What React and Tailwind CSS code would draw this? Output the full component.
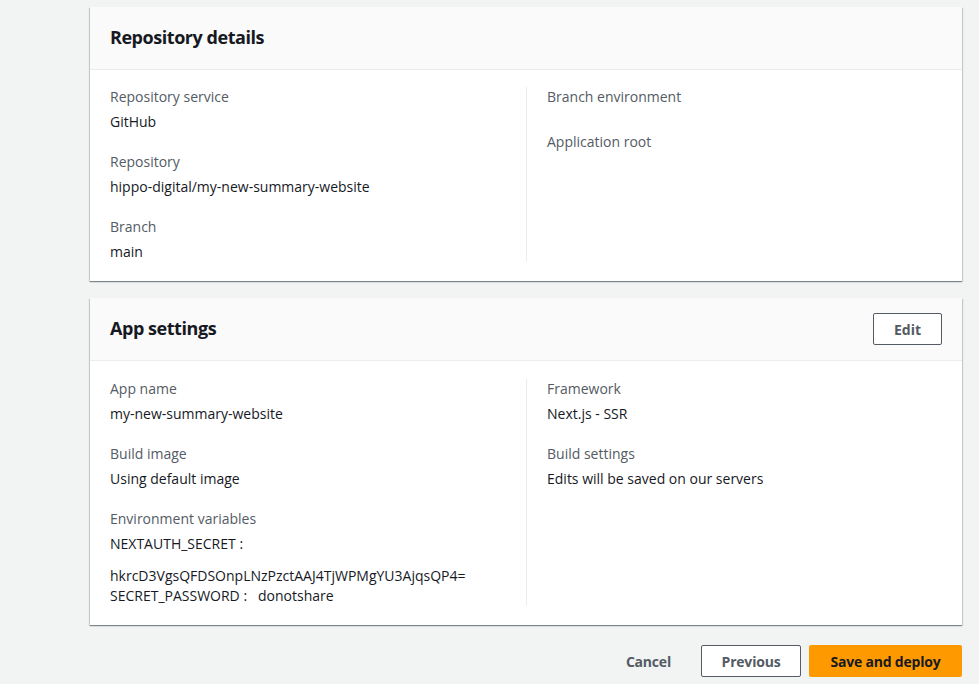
import React from "react";

const font = { fontFamily: '"Open Sans", "Liberation Sans", sans-serif' };

function Field({ label, value, children }) {
  return (
    <div className="mb-[20px] last:mb-0">
      <div className="text-[14px] leading-[20px] text-[#545b64]">{label}</div>
      {value !== undefined && (
        <div className="mt-[5px] text-[14px] leading-[20px] text-[#16191f]">{value}</div>
      )}
      {children}
    </div>
  );
}

function Card({ title, action, bodyTop, children }) {
  return (
    <div className="bg-white shadow-[0_1px_1px_0_rgba(0,28,36,0.3),1px_1px_1px_0_rgba(0,28,36,0.15),-1px_1px_1px_0_rgba(0,28,36,0.15)]">
      <div className="flex h-[63px] items-center justify-between border-b border-[#eaeded] bg-[#fafafa] px-5">
        <h2 className="pb-[3px] text-[18px] font-bold leading-[22px] tracking-[-0.45px] text-[#16191f]">{title}</h2>
        {action}
      </div>
      <div className={"grid grid-cols-2 px-5 pb-[19px] " + bodyTop}>{children}</div>
    </div>
  );
}

export default function App() {
  return (
    <div style={font} className="min-h-[684px] w-full bg-[#f2f3f3] pt-[7px] pl-[90px] pr-[17px]">
      <Card title="Repository details" bodyTop="pt-[17px]">
        <div>
          <Field label="Repository service" value="GitHub" />
          <Field label="Repository" value="hippo-digital/my-new-summary-website" />
          <Field label="Branch" value="main" />
        </div>
        <div className="border-l border-[#eaeded] pl-5">
          <div className="mb-[25px] text-[14px] leading-[20px] text-[#545b64]">Branch environment</div>
          <div className="text-[14px] leading-[20px] text-[#545b64]">Application root</div>
        </div>
      </Card>

      <div className="mt-[17px]">
        <Card
          title="App settings"
          bodyTop="pt-[18px]"
          action={
            <button className="h-[32px] w-[69px] rounded-[2px] border border-[#545b64] bg-white text-[14px] font-bold text-[#545b64]">
              Edit
            </button>
          }
        >
          <div>
            <Field label="App name" value="my-new-summary-website" />
            <Field label="Build image" value="Using default image" />
            <Field label="Environment variables">
              <div className="mt-[5px] text-[14px] leading-[20px] text-[#16191f]">NEXTAUTH_SECRET :</div>
              <div className="mt-[12px] text-[14px] leading-[20px] text-[#16191f]">
                hkrcD3VgsQFDSOnpLNzPzctAAJ4TjWPMgYU3AjqsQP4=
              </div>
              <div className="text-[14px] leading-[20px] text-[#16191f] whitespace-pre">SECRET_PASSWORD :   donotshare</div>
            </Field>
          </div>
          <div className="border-l border-[#eaeded] pl-5">
            <Field label="Framework" value="Next.js - SSR" />
            <Field label="Build settings" value="Edits will be saved on our servers" />
          </div>
        </Card>
      </div>

      <div className="mt-[20px] flex items-center justify-end">
        <button className="mr-[30px] text-[14px] font-bold tracking-[-0.2px] text-[#545b64]">Cancel</button>
        <button className="h-[32px] w-[100px] rounded-[2px] border border-[#545b64] bg-white text-[14px] font-bold tracking-[-0.2px] text-[#545b64]">
          Previous
        </button>
        <button className="ml-[8px] h-[32px] w-[153px] rounded-[2px] bg-[#ff9900] text-[14px] font-bold tracking-[-0.2px] text-[#16191f]">
          Save and deploy
        </button>
      </div>
    </div>
  );
}
